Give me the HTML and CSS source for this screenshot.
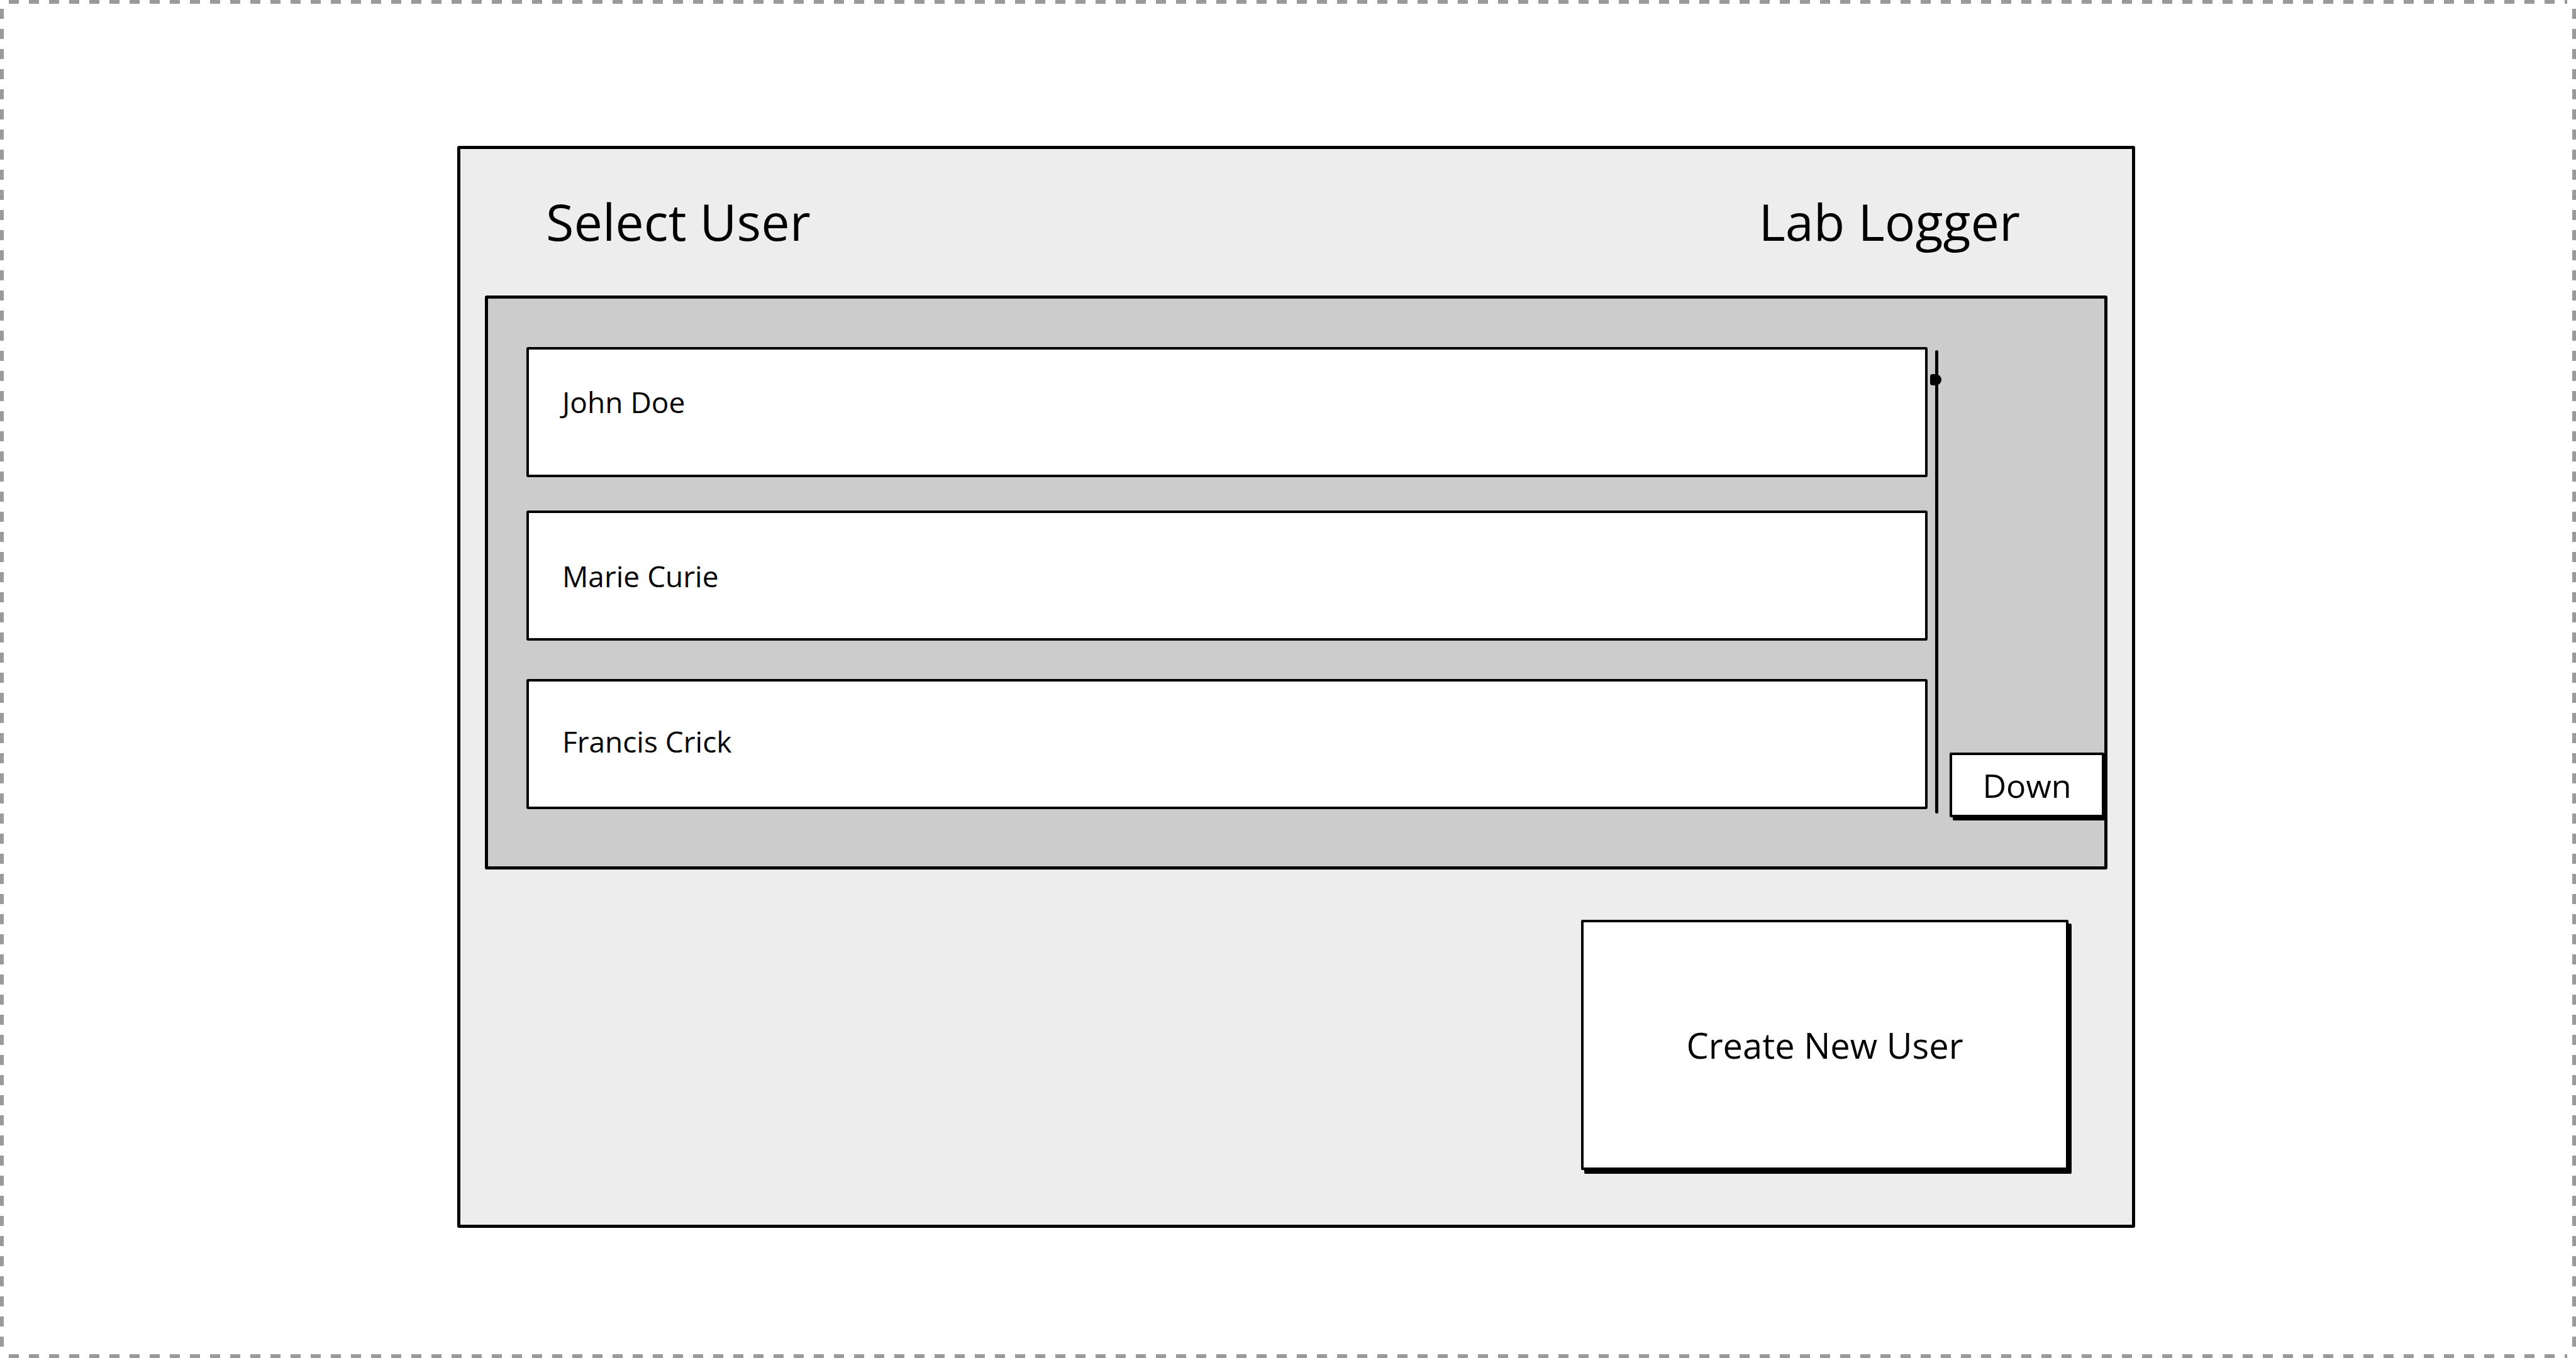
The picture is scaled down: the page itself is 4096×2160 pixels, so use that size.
FILE: index.html
```html
<!DOCTYPE html>
<html lang="en">
<head>
<meta charset="utf-8">
<title>Lab Logger - Select User</title>
<link rel="stylesheet" href="styles.css">
</head>
<body>
<div class="frame">
  <div class="panel">
    <div class="header">
      <div class="title">Select User</div>
      <div class="title">Lab Logger</div>
    </div>
    <div class="listbox">
      <div class="rows">
        <div class="row row--first">John Doe</div>
        <div class="row">Marie Curie</div>
        <div class="row row--last">Francis Crick</div>
      </div>
      <div class="scrollbar"><span class="thumb"></span></div>
      <div class="side">
        <div class="btn btn--down">Down</div>
      </div>
    </div>
    <div class="footer">
      <div class="btn btn--create">Create New User</div>
    </div>
  </div>
</div>
</body>
</html>
```

FILE: styles.css
```css
html, body {
  margin: 0;
  padding: 0;
  background: #ffffff;
}

body {
  font-family: "Open Sans", "Liberation Sans", sans-serif;
  color: #000;
}

.frame {
  box-sizing: border-box;
  width: 4096px;
  height: 2160px;
  padding: 232px 0 0 727px;
  background:
    repeating-linear-gradient(to right, #9a9a9a 0 16px, transparent 16px 32px) left 14px top 0 / calc(100% - 28px) 6px no-repeat,
    repeating-linear-gradient(to right, #9a9a9a 0 16px, transparent 16px 32px) left 14px bottom 0 / calc(100% - 28px) 6px no-repeat,
    repeating-linear-gradient(to bottom, #9a9a9a 0 16px, transparent 16px 32px) left 0 top 14px / 6px calc(100% - 28px) no-repeat,
    repeating-linear-gradient(to bottom, #9a9a9a 0 16px, transparent 16px 32px) right 0 top 14px / 6px calc(100% - 28px) no-repeat,
    #ffffff;
}

.panel {
  box-sizing: border-box;
  width: 2668px;
  height: 1721px;
  border: 5px solid #000;
  border-radius: 3px;
  background: #ededed;
  padding: 0 39px;
  display: flex;
  flex-direction: column;
}

.header {
  box-sizing: border-box;
  height: 233px;
  padding: 59px 139px 0 97px;
  display: flex;
  justify-content: space-between;
  align-items: flex-start;
}

.title {
  font-size: 81px;
  line-height: normal;
  white-space: nowrap;
}

.listbox {
  box-sizing: border-box;
  height: 913px;
  border: 5px solid #000;
  border-radius: 3px;
  background: #cccccc;
  padding: 77px 0 91px 61px;
  display: flex;
  align-items: stretch;
}

.rows {
  width: 2228px;
  display: flex;
  flex-direction: column;
  gap: 53px;
}

.row {
  box-sizing: border-box;
  height: 207px;
  border: 4px solid #000;
  border-radius: 3px;
  background: #fff;
  padding-left: 53px;
  display: flex;
  align-items: center;
  font-size: 46px;
  white-space: nowrap;
}

.row--first {
  padding-bottom: 34px;
}

.row--last {
  margin-top: 8px;
  padding-bottom: 10px;
}

.scrollbar {
  position: relative;
  width: 5px;
  height: 737px;
  margin: 5px 0 0 12px;
  background: #000;
  border-radius: 3px;
  align-self: flex-start;
}

.thumb {
  position: absolute;
  left: -8px;
  top: 38px;
  width: 18px;
  height: 18px;
  background: #000;
  border-radius: 4px 50% 50% 4px;
}

.side {
  margin-left: 18px;
  margin-bottom: -13px;
  width: 246px;
  display: flex;
  flex-direction: column;
  justify-content: flex-end;
}

.btn {
  box-sizing: border-box;
  border: 4px solid #000;
  border-radius: 2px;
  background: #fff;
  display: flex;
  align-items: center;
  justify-content: center;
  white-space: nowrap;
  box-shadow: 5px 5px 0 #000;
}

.btn--down {
  width: 246px;
  height: 103px;
  font-size: 52px;
}

.footer {
  display: flex;
  justify-content: flex-end;
  padding: 80px 62px 0 0;
}

.btn--create {
  width: 775px;
  height: 398px;
  font-size: 56px;
  box-shadow: 5px 6px 0 #000;
}
```
